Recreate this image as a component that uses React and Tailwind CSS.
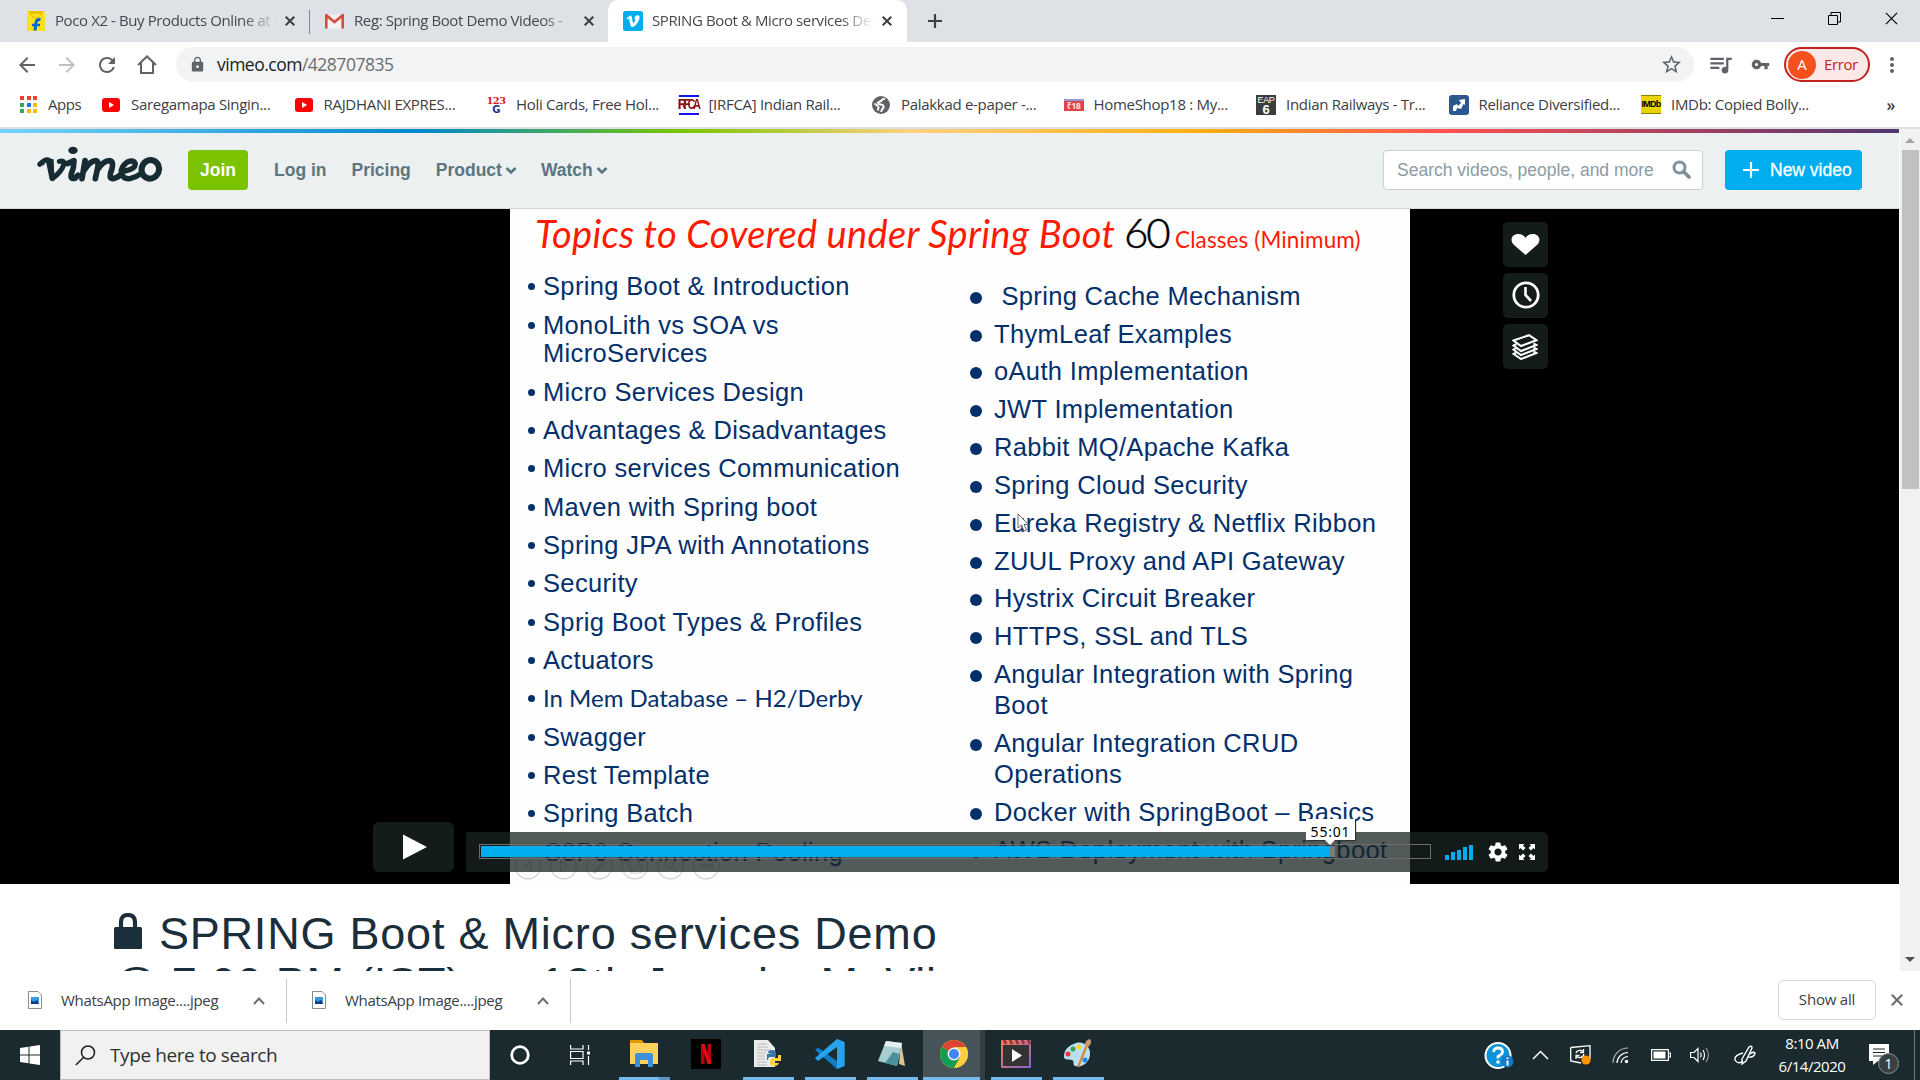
import React from "react";
import { MdLock, MdStarBorder, MdQueueMusic, MdVpnKey, MdMoreVert, MdRefresh, MdArrowBack, MdArrowForward, MdSettings } from "react-icons/md";

const UI = "font-['Open_Sans','Noto_Sans',sans-serif]";
const ARIAL = "font-['Liberation_Sans',Arial,sans-serif]";

function Cross({ size = 10, w = 2, color = "#3c4043" }) {
  return (
    <svg width={size} height={size} viewBox="0 0 10 10" className="shrink-0">
      <path d="M0.7 0.7 L9.3 9.3 M9.3 0.7 L0.7 9.3" stroke={color} strokeWidth={w} fill="none" />
    </svg>
  );
}

function FlipkartIcon() {
  return (
    <svg width="20" height="22" viewBox="0 0 20 22">
      <path d="M1 4 L2 1 H18 L19 4 V21 H1 Z" fill="#ffe11b" />
      <path d="M2 1H18L16 4H4Z" fill="#e8c400" />
      <path d="M5 3 q1 5 5 5 t5-5" stroke="#f5b400" strokeWidth="1.2" fill="none" />
      <path d="M14.5 9.5 q-4 -0.5 -4.5 3 l-1 8" stroke="#0a66d6" strokeWidth="3" fill="none" />
      <path d="M6 15 H14" stroke="#0a66d6" strokeWidth="2.5" />
    </svg>
  );
}

function GmailIcon() {
  return (
    <svg width="19" height="15" viewBox="0 0 19 15">
      <rect x="1" y="0.5" width="17" height="14" fill="#f2f2f2" />
      <path d="M1.3 14.5 V1.2 L9.5 8 L17.700 1.2 V14.500" fill="none" stroke="#d54b3d" strokeWidth="2.6" />
    </svg>
  );
}

function VimeoIcon() {
  return (
    <svg width="20" height="20" viewBox="0 0 20 20">
      <rect width="20" height="20" rx="2.500" fill="#00adef" />
      <path d="M3.500 7.600 L7 4.600 C8.600 4.200 8.900 6 9.200 8.200 C9.500 10.200 9.900 12 10.300 12 C10.900 12 12.400 9.600 12.400 8.400 C12.400 7.600 11.700 7.700 11.100 7.900 C11.800 5.300 13.200 4.200 14.900 4.300 C17.600 4.500 16.700 8 15.200 10.600 C13.400 13.800 11 16.100 9.500 16.100 C7.600 16.100 7.200 13.400 6.700 10.800 C6.300 8.800 6.100 7.600 5.600 7.600 C5.200 7.600 4.700 8 4.200 8.500 Z" fill="#fff" />
    </svg>
  );
}

function Tab({ icon, label, active }) {
  return (
    <div className={active ? "flex h-[42px] w-[299px] items-center rounded-t-[10px] bg-white pl-[15px]" : "flex h-[42px] items-center"}>
      <div className="flex w-[29px] shrink-0 items-center">{icon}</div>
      <div className="mb-[2px] w-[221px] shrink-0 overflow-hidden whitespace-nowrap text-[15px] tracking-[-0.400px] text-[#45494d] [mask-image:linear-gradient(to_right,black_85%,transparent)]">{label}</div>
      <div className="ml-[9px] flex items-center"><Cross /></div>
    </div>
  );
}

function TabStrip() {
  return (
    <div className="flex h-[42px] w-full bg-[#dee1e6]">
      <div className="flex w-[309px] pl-[26px]"><Tab icon={<FlipkartIcon />} label="Poco X2 - Buy Products Online at Best" /></div>
      <div className="mt-[10px] h-[24px] w-px bg-[#80868b]" />
      <div className="flex w-[298px] pl-[15px]"><Tab icon={<GmailIcon />} label="Reg: Spring Boot Demo Videos - " /></div>
      <Tab active icon={<VimeoIcon />} label="SPRING Boot & Micro services Demo" />
      <div className="flex flex-1 items-center pl-[20px]">
        <svg width="16" height="16" viewBox="0 0 16 16"><path d="M8 1V15M1 8H15" stroke="#3c4043" strokeWidth="2.200" /></svg>
      </div>
      <div className="mr-[22px] flex h-[36px] items-center gap-[44px]">
        <svg width="13" height="13" viewBox="0 0 13 13"><path d="M0 6.500H13" stroke="#000" /></svg>
        <svg width="13" height="13" viewBox="0 0 13 13" fill="none" stroke="#000"><path d="M.5 3.500H9.500V12.500H.5ZM3 3V.5H12.500V10H10" /></svg>
        <Cross size={13} w={0.9} color="#000" />
      </div>
    </div>
  );
}

function Toolbar() {
  return (
    <div className="flex h-[46px] w-full items-center bg-white pb-px text-[#5f6368]">
      <div className="flex w-[176px] items-center gap-[16px] pl-[15px]">
        <MdArrowBack size={24} />
        <MdArrowForward size={24} color="#bdc1c6" />
        <MdRefresh size={24} />
        <svg width="24" height="24" viewBox="0 0 24 24" fill="none" stroke="#5f6368" strokeWidth="2"><path d="M3 12 L12 3.500 L21 12 M6 10 V20 H18 V10" /></svg>
      </div>
      <div className="flex h-[35px] w-[1518px] items-center rounded-full bg-[#f1f3f4] pl-[13px] pr-[11px]">
        <MdLock size={17} />
        <div className="ml-[11px] flex-1 pb-px text-[17.500px] tracking-[-0.500px] text-[#6a6e73]"><span className="text-[#202124]">vimeo.com</span>/428707835</div>
        <MdStarBorder size={23} />
      </div>
      <MdQueueMusic size={27} className="ml-[13px]" />
      <MdVpnKey size={19} className="ml-[17px]" />
      <div className="ml-[14px] flex h-[35px] w-[86px] items-center rounded-full border-2 border-[#c5221f] bg-[#fce8e6] pl-[2px] text-[#c5221f]">
        <div className="flex h-[28px] w-[28px] items-center justify-center rounded-full bg-[#f4511e] text-[15px] text-white">A</div>
        <div className="ml-[8px] text-[15px] tracking-[-0.400px]">Error</div>
      </div>
      <MdMoreVert size={24} className="ml-[10px]" />
    </div>
  );
}

function YoutubeIcon() {
  return <svg width="18" height="14" viewBox="0 0 18 14"><rect width="18" height="14" rx="3" fill="#f00" /><path d="M7 4V10L12 7Z" fill="#fff" /></svg>;
}

function GlobeIcon() {
  return (
    <svg width="18" height="18" viewBox="0 0 18 18">
      <circle cx="9" cy="9" r="9" fill="#5f6368" />
      <path d="M13 2.800 Q10 3 9 5 L6 6.500 Q6 8.500 9 8.500 Q12 9 11.500 11.500 Q10 13 9 15.800 M2.500 7.500 Q5 9 6.500 11 L6 14.500" fill="none" stroke="#fff" strokeWidth="2" />
    </svg>
  );
}

const bookmarks = [
  { label: "Saregamapa Singin...", icon: <YoutubeIcon /> },
  { label: "RAJDHANI EXPRES...", icon: <YoutubeIcon /> },
  { label: "Holi Cards, Free Hol...", icon: <div className="flex w-[20px] flex-col items-center font-['DejaVu_Serif',serif] text-[10px] font-black leading-[9px] tracking-[-0.600px] text-[#e01818]"><span>123</span><span className="font-['DejaVu_Sans',sans-serif] text-[#1a2f8a]">G</span></div> },
  { label: "[IRFCA] Indian Rail...", icon: <div className="flex h-[20px] w-[20px] items-center justify-center border-y-2 border-[#1414f0] font-['Liberation_Sans',sans-serif] text-[11px] tracking-[-1.600px] text-[#8b1010]"><span className="-ml-[1px] scale-y-[1.3] font-bold tracking-[-2.600px]">IRFCA</span></div> },
  { label: "Palakkad e-paper -...", icon: <GlobeIcon /> },
  { label: "HomeShop18 : My...", icon: <div className="flex h-[12px] w-[20px] items-center justify-center border-t-2 border-[#8d9bd0] bg-[#e2404a] text-[9px] font-bold tracking-[-0.500px] text-[#fbe0e0]">₹18</div> },
  { label: "Indian Railways - Tr...", icon: <div className="flex h-[20px] w-[20px] flex-col items-center bg-[#3c3c3c] pt-px font-['Liberation_Sans',sans-serif] text-[9px] leading-[8px] text-white"><span>EAP</span><span className="text-[13px] font-bold leading-[11px]">6</span></div> },
  { label: "Reliance Diversified...", icon: <svg width="20" height="20" viewBox="0 0 20 20"><rect width="20" height="20" rx="3" fill="#2b568e" /><path d="M4 16 V11 L8 9 L9 11 L12 8 L10 5 L16 4 V10 L14.500 9 L12 14 L8 13 L7 16Z" fill="#fff" /></svg> },
  { label: "IMDb: Copied Bolly...", icon: <div className="flex h-[19px] w-[20px] items-center justify-center border-y border-[#8f8000] bg-[#e8d400] font-['Liberation_Sans',sans-serif] text-[9px] font-black tracking-[-0.700px] text-black">IMDb</div> },
];

const appDots = ["#ea4335", "#ea4335", "#ea4335", "#34a853", "#1a73e8", "#fbbc04", "#34a853", "#fbbc04", "#fbbc04"];

function Bookmarks() {
  return (
    <div className="flex h-[39px] w-full items-center bg-white pb-[6px] text-[15px] tracking-[-0.300px] text-[#3c4043]">
      <div className="flex w-[101px] items-center pl-[20px]">
        <div className="grid grid-cols-3 gap-[2.500px]">{appDots.map((c, i) => <span key={i} className="h-[4px] w-[4px]" style={{ background: c }} />)}</div>
        <span className="mb-px ml-[11px] tracking-[-0.430px]">Apps</span>
      </div>
      {bookmarks.map((b) => (
        <div key={b.label} className="flex w-[192.500px] items-center whitespace-nowrap">
          <div className="flex w-[20px] shrink-0 justify-center">{b.icon}</div>
          <span className="mb-px ml-[10px]">{b.label}</span>
        </div>
      ))}
      <span className="ml-[53px] text-[16px] font-semibold">»</span>
    </div>
  );
}

function Chevron() {
  return <svg width="12" height="9" viewBox="0 0 12 9" className="mt-px"><path d="M1.500 2 L6 6.500 L10.500 2" fill="none" stroke="#5b7680" strokeWidth="2.600" /></svg>;
}

function VimeoLogo() {
  return (
    <svg width="134" height="46" viewBox="0 0 402 138" className="-ml-[4px] -mt-[10px] shrink-0" fill="none" stroke="#172b33" strokeWidth="17" strokeLinecap="round" strokeLinejoin="round">
      <path d="M17 67 Q34 50 44 54 Q51 58 55 110 Q84 88 90 66 Q92 54 76 58" strokeWidth="15" />
      <path d="M38 54 L50 112 L58 112 L56 54Z" fill="#172b33" strokeWidth="6" />
      <path d="M17 67 L28 66" strokeWidth="7" />
      <ellipse cx="117" cy="25" rx="14" ry="11" fill="#172b33" stroke="none" />
      <path d="M100 65 L120 56 Q120 78 112 96 Q108 114 124 108 L132 100" />
      <path d="M153 56 L144 110 M150 86 Q168 56 186 56 Q196 58 190 82 L184 110 M190 84 Q208 56 226 56 Q240 58 234 80 Q222 110 236 110 Q248 109 260 98" />
      <path d="M272 87 Q303 82 304 66 Q300 52 280 60 Q258 76 262 94 Q268 112 288 110 Q306 106 322 94" strokeWidth="16" />
      <ellipse cx="349" cy="82" rx="26" ry="28" transform="rotate(20 349 82)" strokeWidth="18" />
    </svg>
  );
}

function SiteHeader() {
  return (
    <div className={`flex h-[76px] items-center border-b border-[#cdd5da] bg-[#ecf0f1] pb-px pl-[38px] pr-[37px] text-[17.500px] font-bold text-[#5b7680] ${ARIAL}`}>
      <VimeoLogo />
      <button className="ml-[20px] h-[40px] w-[60px] rounded-[4px] bg-[#7bc200] text-white">Join</button>
      <span className="ml-[26px]">Log in</span>
      <span className="ml-[25px]">Pricing</span>
      <span className="ml-[25px] flex items-center gap-[3px]">Product<Chevron /></span>
      <span className="ml-[24px] flex items-center gap-[3px]">Watch<Chevron /></span>
      <div className="ml-auto flex h-[40px] w-[320px] items-center justify-between rounded-[4px] border border-[#c9d1d6] bg-white pl-[13px] pr-[11px] pt-px font-normal text-[#8c9ba2]">
        Search videos, people, and more
        <svg width="19" height="19" viewBox="0 0 19 19" className="-mt-[2px]" fill="none" stroke="#7f919a"><circle cx="7.500" cy="7.500" r="5.500" strokeWidth="3" /><path d="M11.500 11.500 L17 17" strokeWidth="3.800" strokeLinecap="round" /></svg>
      </div>
      <button className="ml-[22px] flex h-[40px] w-[137px] items-center rounded-[4px] bg-[#00adef] pl-[18px] text-white">
        <svg width="16" height="16" viewBox="0 0 15 15"><path d="M7.500 0V15M0 7.500H15" stroke="#fff" strokeWidth="2" /></svg>
        <span className="ml-[11px] font-normal [-webkit-text-stroke:0.300px_white]">New video</span>
      </button>
    </div>
  );
}

const leftTopics = [
  "Spring Boot & Introduction", "MonoLith vs SOA vs|MicroServices", "Micro Services Design", "Advantages & Disadvantages",
  "Micro services Communication", "Maven with Spring boot", "Spring JPA with Annotations", "Security", "Sprig Boot Types & Profiles",
  "Actuators", "In Mem Database – H2/Derby", "Swagger", "Rest Template", "Spring Batch", "C3P0 Connection Pooling",
];
const rightTopics = [
  "\u00a0Spring Cache Mechanism", "ThymLeaf Examples", "oAuth Implementation", "JWT Implementation", "Rabbit MQ/Apache Kafka",
  "Spring Cloud Security", "Eureka Registry & Netflix Ribbon", "ZUUL Proxy and API Gateway", "Hystrix Circuit Breaker",
  "HTTPS, SSL and TLS", "Angular Integration with Spring|Boot", "Angular Integration CRUD|Operations",
  "Docker with SpringBoot – Basics", "AWS Deployment with Springboot",
];

function Slide() {
  return (
    <div className={`h-[675px] w-[900px] overflow-hidden bg-[#fefefe] text-[#03306b] ${ARIAL}`}>
      <div className="flex h-[56px] items-baseline whitespace-nowrap pl-[25px] font-['Lato',sans-serif] text-[#ff1a00]">
        <span className="w-[589px] text-[38px] italic leading-[47px] tracking-[0.330px]">Topics to Covered under Spring Boot</span>
        <span className="w-[51px] text-[42px] font-light leading-[47px] tracking-[-2px] text-black [-webkit-text-stroke:0.500px_black]">60</span>
        <span className="text-[22.500px] leading-[47px] tracking-[0.120px]">Classes (Minimum)</span>
      </div>
      <div className="flex">
        <ul className="flex w-[460px] flex-col gap-[9.680px] pl-[18px] pt-[7.300px] text-[25.500px] leading-[28.650px] tracking-[0.350px]">
          {leftTopics.map((t) => (
            <li key={t} className="flex whitespace-nowrap">
              <span className="mr-[8px] mt-[11px] h-[7px] w-[7px] shrink-0 rounded-full bg-[#03306b]" />
              <div className={t.startsWith("In Mem") ? "font-['Lato',sans-serif] text-[24px] tracking-[0px]" : ""}>{t.split("|").map((l) => <div key={l}>{l}</div>)}</div>
            </li>
          ))}
        </ul>
        <ul className="flex flex-1 flex-col gap-[6.850px] pt-[15.700px] text-[25.500px] leading-[31px] tracking-[0.340px]">
          {rightTopics.map((t) => (
            <li key={t} className="flex whitespace-nowrap">
              <span className="mr-[12px] mt-[11px] h-[12px] w-[12px] shrink-0 rounded-full bg-[#03306b]" />
              <div>{t.split("|").map((l) => <div key={l}>{l}</div>)}</div>
            </li>
          ))}
        </ul>
      </div>
    </div>
  );
}

function SlideControls() {
  const marks = ["M-3 0L3 -5V5Z", "M3 0L-3 -5V5Z", "M-6 6L5 -5L7 -3L-4 7Z", "M-6 -6H4V0H7V7H-4V0H-6Z", "M-1 -2m-4 0a4 4 0 1 0 8 0a4 4 0 1 0 -8 0M2 2L7 7", "M-6 -1H-3V2H-6ZM-1 -1H2V2H-1ZM4 -1H7V2H4Z"];
  return (
    <svg width="206" height="28" viewBox="0 0 206 28" fill="none" stroke="#cfcfcf" strokeWidth="1.200" className="absolute left-[514px] top-[643px]">
      {marks.map((d, i) => (
        <g key={i} transform={`translate(${14 + i * 35.600} 14)`}><circle r="12.800" /><path d={d} /></g>
      ))}
    </svg>
  );
}

function PlayerButton({ children }) {
  return <button className="flex h-[45px] w-[45px] items-center justify-center rounded-[5px] bg-[#131b1b]">{children}</button>;
}

function Player() {
  return (
    <div className="relative flex h-[675px] justify-center overflow-hidden bg-black pl-[21px]">
      <Slide />
      <SlideControls />
      <div className="absolute right-[351px] top-[13px] flex flex-col gap-[6px]">
        <PlayerButton>
          <svg width="29" height="21" viewBox="0 0 29 21" className="-ml-px"><path d="M14.500 21 L2.500 10.500 C-2 5 2 0 7 0 C11 0 13.500 2 14.500 4 C15.500 2 18 0 22 0 C27 0 31 5 26.500 10.500 Z" fill="#fff" /></svg>
        </PlayerButton>
        <PlayerButton>
          <svg width="28" height="28" viewBox="0 0 28 28" className="-mt-[2px]" fill="none" stroke="#fff"><circle cx="14" cy="14" r="12.200" strokeWidth="2.800" /><path d="M13.500 6V14L19 20" strokeWidth="2.600" /></svg>
        </PlayerButton>
        <PlayerButton>
          <svg width="26" height="26" viewBox="0 0 26 26" className="-ml-px" fill="none" stroke="#fff" strokeWidth="2"><path d="M1.500 6.500 L17 1.200 L24.500 6.200 L9 12Z" /><path d="M4.500 10 L1.500 11.500 L9 17 L24.500 11 L21.500 9.500" /><path d="M4.500 14.200 L1.500 15.700 L9 21 L24.500 15 L21.500 13.500" /><path d="M4.500 18.400 L1.500 19.900 L9 25 L24.500 19 L21.500 17.500" /></svg>
        </PlayerButton>
      </div>
      <div className="absolute left-[373px] top-[613px] flex items-end gap-[12px]">
        <button className="flex h-[50px] w-[81px] items-center justify-center rounded-[6px] bg-[#131b1b]">
          <svg width="24" height="26" viewBox="0 0 24 26" className="-mt-px ml-[2px]"><path d="M0 0.500 L24 13 L0 25.500Z" fill="#fff" /></svg>
        </button>
        <div className="flex h-[40px] w-[1082px] items-center rounded-r-[5px] rounded-l-[2px] bg-[#182323]/75 pl-[13px]">
          <div className="relative mt-[-1px] h-[15px] w-[952px] border border-[#6d6d6d] p-px">
            <div className="flex h-full"><div className="h-full w-[849px] bg-[#00adef]" /><div className="h-full w-[5px] bg-[#7b7b7b]" /></div>
            <div className="absolute left-[826px] top-[-26px] flex h-[21px] w-[49px] items-center justify-center bg-white pt-[4px] text-[14px] tracking-[0.800px] text-black shadow-[1px_1px_1px_#333] font-['Noto_Sans','DejaVu_Sans',sans-serif]">55:01</div>
            <svg width="10" height="5" viewBox="0 0 10 5" className="absolute left-[845px] top-[-5px]"><path d="M0 0H10L5 5Z" fill="#fff" /></svg>
          </div>
          <div className="ml-[14px] flex h-[15px] items-end gap-[2px]">
            <span className="h-[5px] w-[4px] bg-[#00adef]" /><span className="h-[8px] w-[4px] bg-[#00adef]" /><span className="h-[10px] w-[4px] bg-[#00adef]" /><span className="h-[13px] w-[4px] bg-[#00adef]" /><span className="h-[15px] w-[4px] bg-[#00adef]" />
          </div>
          <MdSettings size={24} color="#fff" className="ml-[13px]" />
          <svg width="16" height="16" viewBox="0 0 16 16" className="ml-[9px]" fill="#fff"><path d="M0 0H5.500L4 1.500L6.500 4L4 6.500L1.500 4L0 5.500ZM16 0V5.500L14.500 4L12 6.500L9.500 4L12 1.500L10.500 0ZM16 16H10.500L12 14.500L9.500 12L12 9.500L14.500 12L16 10.500ZM0 16V10.500L1.500 12L4 9.500L6.500 12L4 14.500L5.500 16Z" /></svg>
        </div>
      </div>
      <svg width="14" height="20" viewBox="0 0 14 20" className="absolute left-[1017px] top-[304px]"><path d="M1 1 V15 L4.500 12 L7 18 L9.500 17 L7 11.500 H11.500Z" fill="#fff" stroke="#667" strokeWidth="1" /></svg>
    </div>
  );
}

function VideoTitle() {
  return (
    <div className={`flex h-[87px] overflow-hidden bg-white pl-[114px] pt-[25px] text-[#1a2e3b] ${ARIAL}`}>
      <h1 className="text-[45px] leading-[50px] tracking-[0.780px]">
        <div className="flex">
          <svg width="28" height="36" viewBox="0 0 28 36" className="mr-[17px] mt-[4px]"><rect y="14" width="28" height="22" rx="1.500" fill="#1a2e3b" /><path d="M7 15 V9 Q7 2 14 2 Q21 2 21 9 V15" fill="none" stroke="#1a2e3b" strokeWidth="4.200" /></svg>
          SPRING Boot &amp; Micro services Demo
        </div>
        <div className="-ml-[2px] whitespace-nowrap">@ 7:00 PM (IST) on 13th June by Mr.Vijay</div>
      </h1>
    </div>
  );
}

function Scrollbar() {
  return (
    <div className="flex w-[21px] flex-col items-center border-l border-white bg-[#f1f1f1] pt-[9px]">
      <svg width="10" height="5" viewBox="0 0 10 5"><path d="M0 5L5 0L10 5Z" fill="#a3a3a3" /></svg>
      <div className="mt-[7px] h-[339px] w-[17px] bg-[#c1c1c1]" />
      <svg width="10" height="5" viewBox="0 0 10 5" className="mb-[9px] mt-auto"><path d="M0 0L5 5L10 0Z" fill="#505050" /></svg>
    </div>
  );
}

function Download() {
  return (
    <div className="flex h-[44px] w-[284px] shrink-0 items-center border-r border-[#c6c6c6] pl-[25px]">
      <svg width="14" height="18" viewBox="0 0 14 18" className="-mt-[2px] shrink-0"><path d="M.5 .5H10L13.500 4V17.500H.5Z" fill="#fff" stroke="#8c8c8c" /><rect x="3" y="6" width="8" height="7" fill="#2f9be0" /><path d="M3 9L6 11L9 9L11 13H3Z" fill="#0d3a8a" /></svg>
      <span className="ml-[19px] w-[160px] shrink-0 whitespace-nowrap text-[15px] tracking-[-0.300px] text-[#3c4043]">WhatsApp Image....jpeg</span>
      <svg width="12" height="8" viewBox="0 0 12 8" className="ml-[32px]"><path d="M1 7L6 1.500L11 7" fill="none" stroke="#6a6e73" strokeWidth="2" /></svg>
    </div>
  );
}

function DownloadShelf() {
  return (
    <div className="flex h-[59px] items-center bg-white pl-[3px]">
      <Download /><Download />
      <button className="-mt-px ml-auto h-[40px] w-[98px] rounded-[5px] border border-[#d5d7da] pb-px text-[15px] tracking-[-0.200px] text-[#3c4043]">Show all</button>
      <div className="-mt-px ml-[15px] mr-[17px]"><Cross size={12} w={1.800} color="#6a6e73" /></div>
    </div>
  );
}

const apps = [
  { name: "explorer", icon: <svg width="28" height="29" viewBox="0 0 28 29"><path d="M0 1H12L14 4H0Z" fill="#e09a00" /><path d="M0 4H28V25H0Z" fill="#ffd15c" /><path d="M5 28V16Q5 14 7 14H21Q23 14 23 16V28H18V21H10V28Z" fill="#3c93dc" /></svg>, bar: true, split: true },
  { name: "netflix", icon: <svg width="30" height="30" viewBox="0 0 30 30"><rect width="30" height="30" rx="0" fill="#000" /><path d="M10 5H13.500V25H10ZM16.500 5H20V25H16.500Z" fill="#b1060f" /><path d="M10 5H13.500L20 25H16.500Z" fill="#e50914" /></svg> },
  { name: "python", icon: <svg width="28" height="30" viewBox="0 0 28 30"><path d="M0 1H14L21 9V28H0Z" fill="#ececec" /><path d="M3 5H13M3 8H14M3 11H17M3 14H12M3 17H11M3 20H11M3 23H13M3 26H13" stroke="#b8b8b8" /><path d="M14 14Q14 11 18 11Q22 11 22 14V18H16Q14 18 14 21H13V15H18" fill="#3776ab" /><path d="M27 16V22H20V24H25Q24 27 20 27Q16 27 16 24V21Q17 19 20 19H24V16Z" fill="#ffd43b" /></svg>, bar: true },
  { name: "code", icon: <svg width="30" height="30" viewBox="0 0 30 30"><path d="M22 0L29.500 3V27L22 30L0 11L3 8.500L22 22Z" fill="#0c7dc7" /><path d="M22 0L29.500 3V27L22 30V8L3 22L0 19Z" fill="#28a4ef" /></svg>, bar: true },
  { name: "notepad", icon: <svg width="30" height="27" viewBox="0 0 30 27"><path d="M24 2L28 26L22 24Z" fill="#d9c690" /><path d="M9 1L25 3L20 26L1 21Z" fill="#a6ced3" /><path d="M9 1L25 3L24 8L7 6Z" fill="#e4eff0" /><path d="M16 12L22 14L20 26L8 23Z" fill="#4b909a" /></svg>, bar: true },
  { name: "chrome", icon: <svg width="28" height="28" viewBox="0 0 28 28"><circle cx="14" cy="14" r="14" fill="#fbc116" /><path d="M14 14L1.900 7A14 14 0 0 1 26.100 7Z" fill="#db4437" /><path d="M14 14L1.900 7A14 14 0 0 0 14 28L20 17.500Z" fill="#0f9d58" /><path d="M14 7H26.100A14 14 0 0 1 14 28L20 17.500Z" fill="#ffcd40" /><circle cx="14" cy="14" r="6.500" fill="#f4f4f4" /><circle cx="14" cy="14" r="5" fill="#4285f4" /></svg>, bar: true, active: true },
  { name: "films", icon: <svg width="30" height="28" viewBox="0 0 30 28"><defs><linearGradient id="film" x1="0" y1="0" x2="1" y2="1"><stop offset="0" stopColor="#f47c48" /><stop offset="1" stopColor="#8a63d2" /></linearGradient></defs><rect width="30" height="28" rx="1" fill="url(#film)" /><path d="M3 0L5 4M9 0L11 4M15 0L17 4M21 0L23 4M27 0L29 4" stroke="#8d2f3c" strokeWidth="2.500" /><rect x="2" y="5" width="26" height="21" fill="#333" /><path d="M11 9L21 15.500L11 22Z" fill="#fff" /></svg>, bar: true },
  { name: "paint", icon: <svg width="30" height="29" viewBox="0 0 30 29"><path d="M13 4C21 2 28 8 27 16C26 24 19 29 12 27C9 26 12 22 9 21C5 20 1 22 1 17C1 11 6 6 13 4Z" fill="#b9dff2" /><circle cx="5" cy="15" r="2.500" fill="#e53935" /><circle cx="10" cy="10" r="2.500" fill="#43a047" /><circle cx="16" cy="8" r="2.500" fill="#fdd835" /><circle cx="22" cy="21" r="2.500" fill="#1e88e5" /><path d="M15 28L24 6" stroke="#d98736" strokeWidth="2.200" /><path d="M22 6Q22 1 27 0Q30 4 25 8Z" fill="#c79a6a" /></svg>, bar: true },
];

function AppButton({ app }) {
  return (
    <div className={app.active ? "flex h-[50px] w-[62px] flex-col items-center border-r-[5px] border-[#333f43] bg-[#465459]" : "flex h-[50px] w-[62px] flex-col items-center"}>
      <div className={app.active ? "flex flex-1 items-center justify-center pl-[4px]" : "flex flex-1 items-center justify-center"}>{app.icon}</div>
      {app.bar ? <div className={app.active ? "h-[3px] w-full bg-[#76b9ed]" : app.split ? "h-[3px] w-[51px] border-r-[11px] border-[#5f92bd] bg-[#76b9ed]" : "h-[3px] w-[51px] bg-[#76b9ed]"} /> : <div className="h-[3px]" />}
    </div>
  );
}

function Taskbar() {
  return (
    <div className="flex h-[50px] w-full items-center bg-[#1a2a2e] text-white">
      <div className="flex w-[60px] justify-center"><svg width="20" height="20" viewBox="0 0 20 20" fill="#fff"><path d="M0 3L8.500 1.800V9.500H0ZM9.500 1.600L20 0V9.500H9.500ZM0 10.500H8.500V18.200L0 17ZM9.500 10.500H20V20L9.500 18.400Z" /></svg></div>
      <div className="flex h-[50px] w-[430px] items-center border border-[#bdbdbd] bg-[#f1f1f1] pl-[14px]">
        <svg width="21" height="21" viewBox="0 0 21 21" fill="none" stroke="#222" strokeWidth="1.600"><circle cx="13" cy="7.500" r="6.500" /><path d="M8.500 12.500L.8 20" /></svg>
        <span className="ml-[14px] text-[19px] tracking-[-0.400px] text-[#303030]">Type here to search</span>
      </div>
      <div className="flex w-[60px] justify-center"><svg width="20" height="20" viewBox="0 0 20 20"><circle cx="10" cy="10" r="8.300" fill="none" stroke="#fff" strokeWidth="2.800" /></svg></div>
      <div className="mr-px flex w-[62px] justify-center pr-[2px]"><svg width="20" height="20" viewBox="0 0 20 20" fill="none" stroke="#fff" strokeWidth="1.200"><path d="M.6 0V4H13V0M.6 6.500H13V13.500H.6ZM.6 20V16H13V20M18.500 0V5M18.500 11V20" /><rect x="17" y="6.500" width="3" height="3" fill="#fff" stroke="none" /></svg></div>
      {apps.map((a) => <AppButton key={a.name} app={a} />)}
      <div className="ml-auto flex h-[50px] items-center">
        <svg width="30" height="28" viewBox="0 0 30 28" className="mt-[2px]"><circle cx="14" cy="13.500" r="12.500" fill="#0a93d8" stroke="#fff" strokeWidth="2" /><path d="M9.500 10Q10 6 14 6Q18.500 6 18.500 10Q18.500 12 14 14.500V16.500" fill="none" stroke="#fff" strokeWidth="2.800" /><circle cx="14" cy="20" r="1.800" fill="#fff" /><circle cx="23.500" cy="19.500" r="6" fill="#1379c4" /><path d="M23.500 18.500V23.500M23.500 15.500V17" stroke="#fff" strokeWidth="2" /></svg>
        <svg width="17" height="10" viewBox="0 0 17 10" className="ml-[18px]" fill="none" stroke="#fff" strokeWidth="1.500"><path d="M1 9L8.500 1.500L16 9" /></svg>
        <svg width="21" height="20" viewBox="0 0 21 20" className="ml-[21px]" fill="none" stroke="#fff" strokeWidth="1.300"><path d="M.7 2.500L20 .7V14M.7 2.500V16L11 18" /><path d="M6 8Q7 5 11 5.500L13.500 6.500M13.500 4V7.500H10M14 9Q13 13 9 12.500L6 11.500M6 14V10.500H9.500" /><circle cx="16" cy="15" r="4.600" fill="#ff9500" stroke="none" /></svg>
        <svg width="17" height="17" viewBox="0 0 17 17" className="ml-[21px]" fill="none" stroke="#fff" strokeWidth="1.200"><path d="M1 16A15 15 0 0 1 16 1" opacity=".65" /><path d="M5 16A11 11 0 0 1 16 5.500M9 16A7 7 0 0 1 16 9.500" /><circle cx="14.500" cy="14.500" r="1.700" fill="#fff" stroke="none" /></svg>
        <svg width="20" height="12" viewBox="0 0 20 12" className="ml-[22px]"><path d="M.6 .6H17.400V11.400H.6ZM18 4H19.500V8H18" fill="none" stroke="#fff" strokeWidth="1.200" /><rect x="2.500" y="2.500" width="12" height="7" fill="#fff" /></svg>
        <svg width="21" height="18" viewBox="0 0 21 18" className="ml-[19px]" fill="none" stroke="#fff" strokeWidth="1.200"><path d="M.6 6.500H4L8 2.500V15.500L4 11.500H.6ZM10.500 6.500Q12 9 10.500 11.500M13 4Q16 9 13 14" /><path d="M16 2Q21 9 16 16" opacity=".5" /></svg>
        <svg width="22" height="20" viewBox="0 0 22 20" className="ml-[23px]" fill="none" stroke="#fff" strokeWidth="1.400"><path d="M8 14L15 2Q18 0 18 3L12 16L8 19Z" /><path d="M9 8Q0 10 1 15Q4 20 9 16M14 12Q20 13 21 8Q20 6 16 9" /></svg>
        <div className="ml-[21px] w-[70px] whitespace-nowrap text-center text-[15px] leading-[23px] tracking-[-0.450px]"><div>8:10 AM</div><div>6/14/2020</div></div>
        <svg width="31" height="31" viewBox="0 0 31 31" className="ml-[22px] mt-[9px]"><path d="M0 0H20V17H9L4 21V17H0Z" fill="#fff" /><path d="M4 5H16M4 8.500H16M4 12H16" stroke="#1a2a2e" strokeWidth="1.200" /><circle cx="19.500" cy="19.500" r="10" fill="#3a4144" stroke="#8c9294" /><text x="19.500" y="24.500" fill="#fff" fontSize="14" textAnchor="middle" fontFamily="Open Sans">1</text></svg>
        <div className="ml-[14px] mr-[5px] h-[50px] w-px bg-[#6e797c]" />
      </div>
    </div>
  );
}

export default function App() {
  return (
    <div className={`flex h-[1080px] w-[1920px] flex-col overflow-hidden bg-white ${UI}`}>
      <TabStrip />
      <Toolbar />
      <Bookmarks />
      <div className="h-[2px] shrink-0 bg-[#dcdfe3]" />
      <div className="flex h-[842px] shrink-0">
        <div className="w-[1899px]">
          <div className="h-[4px] bg-[linear-gradient(90deg,#75d3f8_0%,#0088cc_22%,#7bc600_36%,#ffd080_48%,#ffb010_63%,#ff5050_76%,#50366f_100%)]" />
          <SiteHeader />
          <Player />
          <VideoTitle />
        </div>
        <Scrollbar />
      </div>
      <DownloadShelf />
      <Taskbar />
    </div>
  );
}
